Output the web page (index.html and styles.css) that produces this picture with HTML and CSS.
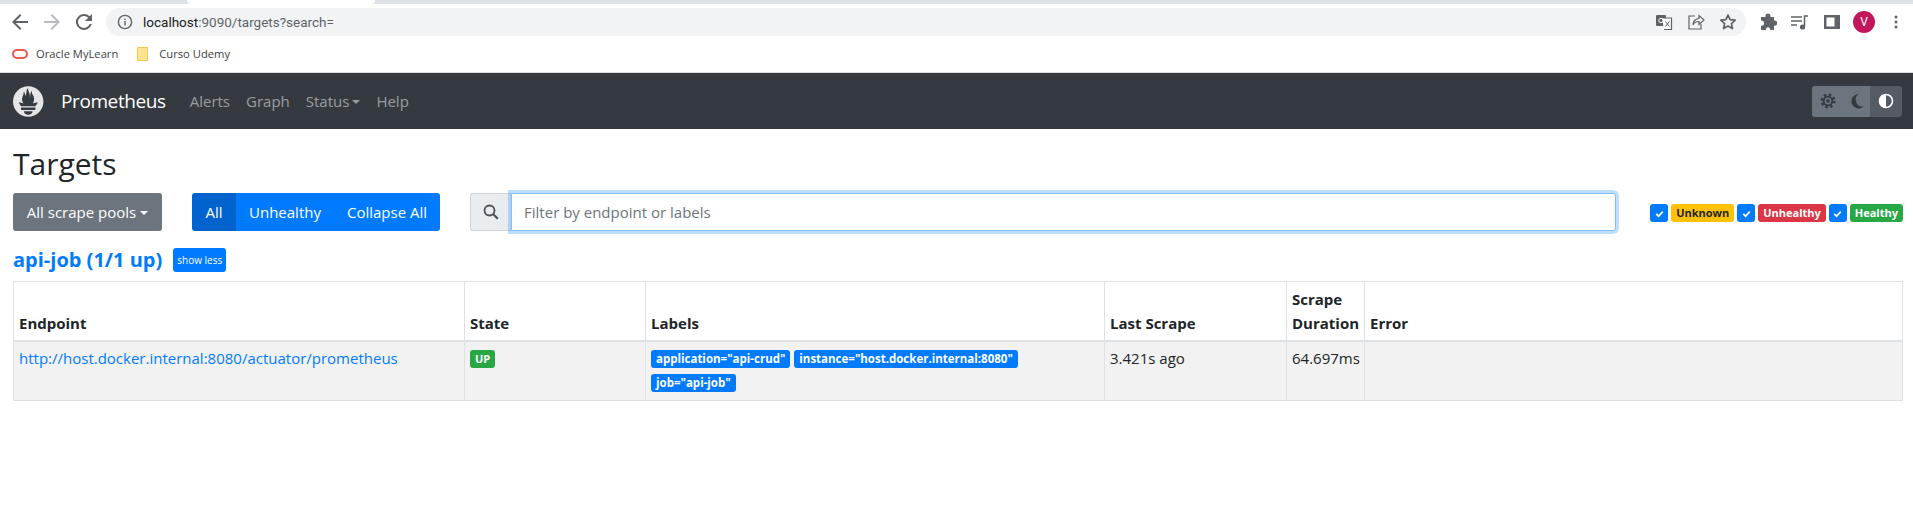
FILE: index.html
```html
<!DOCTYPE html>
<html lang="en">
<head>
    <meta charset="UTF-8">
    <title>Prometheus Time Series Collection and Processing Server</title>
    <link rel="stylesheet" href="styles.css">
</head>
<body>

    <!-- browser chrome -->
    <div class="tabstrip"><div class="tab"></div></div>

    <div class="toolbar">
        <svg class="tool" viewBox="0 0 24 24"><path d="M20 11H7.8l5.6-5.6L12 4l-8 8 8 8 1.4-1.4L7.8 13H20z" fill="#5f6368"/></svg>
        <svg class="tool" viewBox="0 0 24 24"><path d="M4 11h12.2l-5.6-5.6L12 4l8 8-8 8-1.4-1.4 5.6-5.6H4z" fill="#b9bbbe"/></svg>
        <svg class="tool" viewBox="0 0 24 24"><path d="M17.65 6.35A8 8 0 1 0 19.73 14h-2.08a6 6 0 1 1-1.41-6.24L13 11h7V4z" fill="#5f6368"/></svg>
        <div class="omnibox">
            <svg class="info" viewBox="0 0 16 16"><circle cx="8" cy="8" r="6.6" fill="none" stroke="#5f6368" stroke-width="1.4"/><rect x="7.3" y="7" width="1.4" height="4.5" fill="#5f6368"/><rect x="7.3" y="4.5" width="1.4" height="1.5" fill="#5f6368"/></svg>
            <span class="url"><span class="host">localhost</span>:9090/targets?search=</span>
            <div class="omni-icons">
                <svg class="omni-icon" viewBox="0 0 18 18"><rect x="1" y="2" width="10" height="11" rx="1" fill="#5f6368"/><path d="M7 5h9.500v11.500H9" fill="#fff" stroke="#5f6368" stroke-width="1.200"/><circle cx="6" cy="7.500" r="2.200" fill="none" stroke="#fff"/><path d="M10.500 8.500l4 5M14.500 8.500l-4 5" stroke="#5f6368"/></svg>
                <svg class="omni-icon" viewBox="0 0 18 18"><path d="M8 3H2v13h12v-5" fill="none" stroke="#5f6368" stroke-width="1.200"/><path d="M6 12c0-4 3-6.500 6-6.500V2.500l5 4.500-5 4.500V8.500c-3 0-5 1-6 3.500z" fill="#f1f3f4" stroke="#5f6368" stroke-width="1.200"/></svg>
                <svg class="omni-icon" viewBox="0 0 18 18"><path d="M9 2l2.100 4.700 5.100.5-3.800 3.400 1.100 5L9 13l-4.500 2.600 1.100-5-3.800-3.400 5.100-.5z" fill="none" stroke="#5f6368" stroke-width="1.700" stroke-linejoin="round"/></svg>
            </div>
        </div>
        <div class="ext-icons">
            <svg class="ext" viewBox="0 0 18 18"><path d="M6.500 3a2.500 2.500 0 0 1 5 0v1H15v3.500h1a2.700 2.700 0 0 1 0 5.300h-1V17h-3.800v-1a2.300 2.300 0 0 0-4.400 0v1H2v-4.200h1a2.700 2.700 0 0 0 0-5.300H2V4h4.500z" fill="#5f6368"/></svg>
            <svg class="ext" viewBox="0 0 18 18"><path d="M0 4h11M0 8h11M0 12h6" stroke="#5f6368" stroke-width="1.400" fill="none"/><path d="M13.500 13.500V3h3.500" stroke="#5f6368" stroke-width="1.500" fill="none"/><circle cx="11.500" cy="14" r="2.600" fill="#5f6368"/></svg>
            <svg class="ext" viewBox="0 0 18 18"><rect x="1" y="2" width="16" height="14" fill="#5f6368"/><rect x="3.500" y="4.500" width="8" height="9" fill="#fff"/></svg>
            <div class="avatar">V</div>
            <svg class="ext kebab" viewBox="0 0 18 18"><circle cx="9" cy="4" r="1.500" fill="#5f6368"/><circle cx="9" cy="9" r="1.500" fill="#5f6368"/><circle cx="9" cy="14" r="1.500" fill="#5f6368"/></svg>
        </div>
    </div>

    <div class="bookmarks">
        <a class="bookmark">
            <svg class="oracle" viewBox="0 0 16 10"><rect x="1" y="1" width="14" height="8" rx="4" fill="none" stroke="#e8584f" stroke-width="2"/></svg>
            Oracle MyLearn
        </a>
        <a class="bookmark">
            <svg class="folder" viewBox="0 0 11 14"><path d="M.5.5h10v13H.5z" fill="#fde293" stroke="#f2c94c"/></svg>
            Curso Udemy
        </a>
    </div>

    <!-- prometheus page -->
    <nav class="navbar">
        <svg class="logo" viewBox="0 0 115.333 114"><path fill="#e6e6e6" d="M56.667.667C25.372.667 0 26.036 0 57.332c0 31.295 25.372 56.666 56.667 56.666s56.666-25.371 56.666-56.666C113.333 26.036 87.961.667 56.667.667zm0 106.055c-8.904 0-16.123-5.948-16.123-13.283H72.79c0 7.334-7.219 13.283-16.123 13.283zM83.297 89.04H30.034v-9.658h53.264v9.658zm-.191-14.629H30.186c-.176-.203-.356-.403-.526-.609-5.452-6.62-6.736-10.076-7.983-13.598-.021-.116 6.611 1.355 11.314 2.413 0 0 2.42.56 5.958 1.205-3.397-3.982-5.414-9.044-5.414-14.218 0-11.359 8.712-21.285 5.569-29.308 3.059.249 6.331 6.456 6.552 16.161 3.252-4.494 4.613-12.701 4.613-17.733 0-5.21 3.433-11.262 6.867-11.469-3.061 5.045.793 9.37 4.219 20.099 1.285 4.03 1.121 10.812 2.113 15.113.329-8.933 1.865-21.967 7.532-26.467-2.5 5.667.37 12.758 2.333 16.167 3.167 5.5 5.087 9.667 5.087 17.548 0 5.284-1.951 10.259-5.242 14.148 3.742-.702 6.326-1.335 6.326-1.335l12.152-2.371c.001-.001-1.765 7.261-8.55 14.254z"/></svg>
        <a class="brand">Prometheus</a>
        <a class="nav-link">Alerts</a>
        <a class="nav-link">Graph</a>
        <a class="nav-link">Status<span class="caret"></span></a>
        <a class="nav-link">Help</a>
        <div class="theme-toggle">
            <button class="theme-btn theme-sun" type="button">
                <svg class="theme-icon" viewBox="0 0 16 16"><circle cx="8" cy="8" r="6" fill="none" stroke="#343a40" stroke-width="3" stroke-dasharray="2.350 2.360"/><circle cx="8" cy="8" r="4.300" fill="#6c757d" stroke="#343a40" stroke-width="1.800"/><circle cx="8" cy="8" r="1.800" fill="#343a40"/></svg>
            </button>
            <button class="theme-btn theme-moon" type="button">
                <svg class="theme-icon" viewBox="0 0 16 16"><path d="M10 1a7.200 7.200 0 1 0 4.500 12.500A6.800 6.800 0 0 1 10 1z" fill="#343a40"/></svg>
            </button>
            <button class="theme-btn active" type="button">
                <svg class="theme-icon" viewBox="0 0 16 16"><circle cx="8" cy="8" r="6.500" fill="none" stroke="#fff" stroke-width="1.600"/><path d="M8 1.500a6.500 6.500 0 0 0 0 13z" fill="#fff"/></svg>
            </button>
        </div>
    </nav>

    <main class="content">
        <h2 class="title">Targets</h2>

        <div class="filters">
            <button class="btn btn-grey" type="button">All scrape pools<span class="caret"></span></button>
            <div class="btn-group">
                <button class="btn btn-blue active" type="button">All</button>
                <button class="btn btn-blue" type="button">Unhealthy</button>
                <button class="btn btn-blue" type="button">Collapse All</button>
            </div>
            <div class="search">
                <span class="search-addon">
                    <svg class="search-icon" viewBox="0 0 16 16"><circle cx="6.500" cy="6.500" r="5" fill="none" stroke="#495057" stroke-width="1.800"/><path d="M10.300 10.300l4.500 4.500" stroke="#495057" stroke-width="2.200"/></svg>
                </span>
                <input class="search-input" type="text" placeholder="Filter by endpoint or labels">
            </div>
            <div class="health">
                <span class="check"><svg viewBox="0 0 12 12"><path d="M2.500 6.500l2.500 2.500 4.500-5" fill="none" stroke="#fff" stroke-width="2"/></svg></span>
                <span class="badge badge-yellow">Unknown</span>
                <span class="check"><svg viewBox="0 0 12 12"><path d="M2.500 6.500l2.500 2.500 4.500-5" fill="none" stroke="#fff" stroke-width="2"/></svg></span>
                <span class="badge badge-red">Unhealthy</span>
                <span class="check"><svg viewBox="0 0 12 12"><path d="M2.500 6.500l2.500 2.500 4.500-5" fill="none" stroke="#fff" stroke-width="2"/></svg></span>
                <span class="badge badge-green">Healthy</span>
            </div>
        </div>

        <div class="pool-head">
            <a class="pool-name">api-job (1/1 up)</a>
            <button class="btn-xs" type="button">show less</button>
        </div>

        <table class="targets">
            <colgroup>
                <col class="c-endpoint"><col class="c-state"><col class="c-labels"><col class="c-last"><col class="c-duration"><col>
            </colgroup>
            <thead>
                <tr>
                    <th>Endpoint</th>
                    <th>State</th>
                    <th>Labels</th>
                    <th>Last Scrape</th>
                    <th>Scrape Duration</th>
                    <th>Error</th>
                </tr>
            </thead>
            <tbody>
                <tr>
                    <td><a class="endpoint">http://host.docker.internal:8080/actuator/prometheus</a></td>
                    <td class="state"><span class="badge badge-green">UP</span></td>
                    <td class="labels">
                        <span class="badge badge-blue">application="api-crud"</span>
                        <span class="badge badge-blue">instance="host.docker.internal:8080"</span>
                        <span class="badge badge-blue">job="api-job"</span>
                    </td>
                    <td>3.421s ago</td>
                    <td>64.697ms</td>
                    <td></td>
                </tr>
            </tbody>
        </table>
    </main>

</body>
</html>
```

FILE: styles.css
```css
* {
    box-sizing: border-box;
}

body {
    font-family: 'Open Sans', 'Noto Sans', sans-serif;
    font-size: 15px;
    color: #212529;
    background-color: #fff;
    margin: 0;
    padding: 0;
}

/* browser chrome */
.tabstrip {
    height: 4px;
    background-color: #dee1e6;
    padding-left: 187px;
}

.tab {
    width: 188px;
    height: 4px;
    background-color: #fff;
    border-radius: 0 0 4px 4px;
}

.toolbar {
    height: 32px;
    display: flex;
    align-items: center;
    padding: 4px 0 0 8px;
}

.tool {
    width: 24px;
    height: 24px;
    margin-right: 8px;
    flex: none;
}

.omnibox {
    width: 1640px;
    height: 28px;
    margin-left: 2px;
    background-color: #f1f3f4;
    border-radius: 14px;
    display: flex;
    align-items: center;
    padding-left: 11px;
}

.info {
    width: 16px;
    height: 16px;
    margin-right: 10px;
}

.url {
    font-family: 'Roboto', sans-serif;
    font-size: 13.5px;
    color: #5f6368;
}

.host {
    color: #202124;
}

.omni-icons {
    margin-left: auto;
    display: flex;
    gap: 14px;
    padding-right: 9px;
}

.omni-icon {
    width: 18px;
    height: 18px;
}

.ext-icons {
    display: flex;
    align-items: center;
    gap: 14px;
    padding-left: 13px;
}

.ext {
    width: 18px;
    height: 18px;
}

.avatar {
    width: 22px;
    height: 22px;
    margin-left: -2px;
    border-radius: 50%;
    background-color: #c2185b;
    color: #fff;
    font-family: 'Roboto', sans-serif;
    font-size: 12px;
    line-height: 22px;
    text-align: center;
}

.kebab {
    margin-left: -2px;
}

.bookmarks {
    height: 37px;
    display: flex;
    align-items: center;
    gap: 19px;
    padding: 0 0 1px 12px;
    border-bottom: 1px solid #dadce0;
}

.bookmark {
    display: flex;
    align-items: center;
    font-size: 11.2px;
    color: #3c4043;
}

.oracle {
    width: 16px;
    height: 10px;
    margin-right: 8px;
}

.folder {
    width: 11px;
    height: 14px;
    margin-right: 11px;
}

/* navbar */
.navbar {
    height: 56px;
    background-color: #343a40;
    display: flex;
    align-items: center;
    padding: 0 11px 0 13px;
}

.logo {
    width: 31px;
    height: 31px;
    margin-right: 17px;
}

.brand {
    font-size: 19px;
    letter-spacing: -0.4px;
    color: #fff;
    margin-right: 24px;
}

.nav-link {
    font-size: 15px;
    color: rgba(255, 255, 255, 0.5);
    margin-right: 16px;
}

.caret {
    display: inline-block;
    margin-left: 3px;
    vertical-align: 3px;
    border-top: 4px solid;
    border-left: 4px solid transparent;
    border-right: 4px solid transparent;
}

.theme-toggle {
    margin-left: auto;
    display: flex;
    height: 31px;
    border-radius: 3px;
    overflow: hidden;
}

.theme-btn {
    width: 29px;
    border: none;
    padding: 0;
    background-color: #6c757d;
    display: flex;
    align-items: center;
    justify-content: center;
}

.theme-sun {
    width: 31px;
}

.theme-moon {
    width: 27px;
}

.theme-btn.active {
    width: 32px;
    background-color: #545b62;
}

.theme-icon {
    width: 16px;
    height: 16px;
}

/* targets */
.content {
    padding: 0 10px 0 13px;
}

.title {
    font-size: 30px;
    font-weight: 500;
    line-height: 35px;
    margin: 0;
    padding-top: 17px;
}

.filters {
    display: flex;
    align-items: center;
    margin-top: 12px;
}

.btn {
    height: 38px;
    border: none;
    border-radius: 3px;
    color: #fff;
    font-family: inherit;
    font-size: 15px;
    padding: 0 13px;
}

.btn-grey {
    width: 149px;
    background-color: #6c757d;
    margin-right: 30px;
}

.btn-grey .caret {
    margin-left: 4px;
}

.btn-group {
    display: flex;
    border-radius: 3px;
    overflow: hidden;
    margin-right: 30px;
}

.btn-group .btn {
    border-radius: 0;
}

.btn-blue {
    background-color: #007bff;
}

.btn-blue.active {
    width: 44px;
    padding: 0;
    background-color: #0062cc;
}

.search {
    display: flex;
    width: 1146px;
    height: 38px;
}

.search-addon {
    width: 41px;
    background-color: #e9ecef;
    border: 1px solid #ced4da;
    border-right: none;
    border-radius: 3px 0 0 3px;
    display: flex;
    align-items: center;
    justify-content: center;
}

.search-icon {
    width: 16px;
    height: 16px;
}

.search-input {
    flex: 1;
    font-family: inherit;
    font-size: 15px;
    color: #495057;
    border: 1px solid #80bdff;
    border-radius: 0 3px 3px 0;
    padding: 0 12px;
    outline: none;
    box-shadow: 0 0 0 3px rgba(0, 123, 255, 0.25);
}

.search-input::placeholder {
    color: #6c757d;
}

.health {
    display: flex;
    align-items: center;
    gap: 3px;
    margin: 2px 0 0 auto;
}

.check {
    width: 18px;
    height: 18px;
    background-color: #007bff;
    border-radius: 3px;
    display: flex;
    align-items: center;
    justify-content: center;
}

.check svg {
    width: 11px;
    height: 11px;
}

.badge {
    display: inline-block;
    font-size: 11px;
    font-weight: 700;
    line-height: 12px;
    padding: 3px 5px;
    border-radius: 3px;
    color: #fff;
    white-space: nowrap;
}

.badge-yellow {
    background-color: #ffc107;
    color: #212529;
}

.badge-red {
    background-color: #dc3545;
}

.badge-green {
    background-color: #28a745;
}

.badge-blue {
    background-color: #007bff;
}

.pool-head {
    display: flex;
    align-items: center;
    margin-top: 15px;
}

.pool-name {
    font-size: 20px;
    font-weight: 700;
    color: #007bff;
}

.btn-xs {
    height: 24px;
    margin-left: 11px;
    border: none;
    border-radius: 3px;
    padding: 0 4px;
    background-color: #007bff;
    color: #fff;
    font-family: inherit;
    font-size: 10px;
}

.targets {
    width: 1890px;
    margin-top: 8px;
    border-collapse: collapse;
    table-layout: fixed;
}

.c-endpoint { width: 451px; }
.c-state { width: 181px; }
.c-labels { width: 459px; }
.c-last { width: 182px; }
.c-duration { width: 78px; }

.targets th,
.targets td {
    border: 1px solid #dee2e6;
    text-align: left;
    line-height: 24px;
}

.targets th {
    vertical-align: bottom;
    font-weight: 700;
    border-bottom-width: 2px;
    padding: 5px;
}

.targets td {
    height: 59px;
    vertical-align: top;
    background-color: #f2f2f2;
    line-height: 26px;
    padding: 3px 5px 0;
}

.endpoint {
    color: #007bff;
}

.targets .state,
.targets .labels {
    line-height: 24px;
}

.labels .badge {
    font-size: 11.5px;
}
```
